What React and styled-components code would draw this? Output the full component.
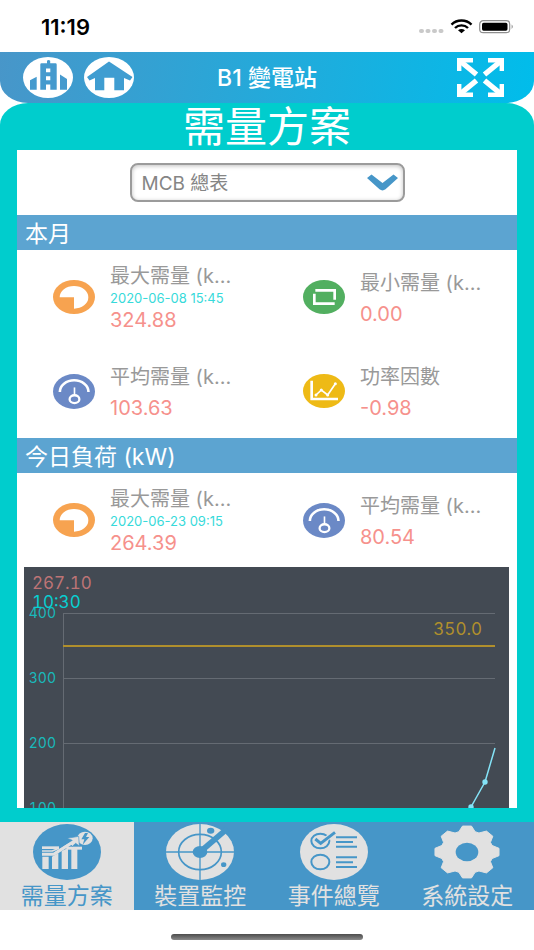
import React, {Component} from 'react';
import styled, {createGlobalStyle} from 'styled-components';

const GlobalStyle = createGlobalStyle`
    * {
        box-sizing: border-box;
    }

    body {
        margin: 0;
        background-color: #fff;
        font-family: Inter, "Noto Sans CJK TC", sans-serif;
    }

    h1, h2, p {
        margin: 0;
        font-weight: 400;
    }

    button, select {
        font-family: inherit;
    }

    svg {
        display: block;
        flex: none;
    }
`;

const StyledApp = styled.div`
    display: flex;
    flex-direction: column;
    height: 100vh;
`;

const StatusBar = styled.div`
    display: flex;
    align-items: center;
    justify-content: space-between;
    flex: none;
    height: 52px;
    padding: 2px 20px 0 41px;
    font-size: 22px;
    font-weight: 600;
    color: #000;
`;

const StyledHeader = styled.header`
    display: grid;
    grid-template-columns: 1fr auto 1fr;
    align-items: center;
    flex: none;
    height: 51px;
    padding: 0 30px 0 23px;
    border-radius: 0 0 28px 28px / 0 0 22px 22px;
    background: linear-gradient(100deg, #4896c9, #00bdeb);
    color: #fff;
`;

const HeaderGroup = styled.div`
    display: flex;
    gap: 11px;
    justify-content: ${props => props.$end ? 'flex-end' : 'flex-start'};
`;

const IconButton = styled.button`
    padding: 0;
    border: 0;
    background: none;
    cursor: pointer;
`;

const StationName = styled.p`
    padding-left: 7px;
    font-size: 23px;
    line-height: 28px;
    font-weight: 500;
`;

const Panel = styled.main`
    display: flex;
    flex-direction: column;
    flex: 1;
    min-height: 0;
    padding: 0 17px 14px;
    border-radius: 28px 28px 0 0 / 22px 22px 0 0;
    background-color: #00cdcd;
`;

const PanelTitle = styled.h1`
    flex: none;
    font-size: 42px;
    line-height: 47px;
    text-align: center;
    color: #fff;
`;

const Content = styled.div`
    flex: 1;
    min-height: 0;
    overflow: hidden;
    background-color: #fff;
`;

const SelectRow = styled.div`
    display: flex;
    justify-content: center;
    padding: 13px 0;
`;

const SelectBox = styled.div`
    position: relative;
    width: 55%;

    svg {
        position: absolute;
        top: 11px;
        right: 7px;
        pointer-events: none;
    }
`;

const StyledSelect = styled.select`
    display: block;
    width: 100%;
    height: 39px;
    padding: 2px 40px 0 10px;
    border: 2px solid #9b9b9b;
    border-radius: 8px;
    box-shadow: inset 0 1px 4px rgba(0, 0, 0, 0.25);
    appearance: none;
    background-color: #fff;
    font-size: 19px;
    color: #858585;
`;

const SectionTitle = styled.h2`
    height: 35px;
    padding: 3px 0 0 8px;
    background-color: #5ca4d1;
    font-size: 23px;
    line-height: 32px;
    color: #fff;
`;

const CardGrid = styled.div`
    display: grid;
    grid-template-columns: 1fr 1fr;
    grid-auto-rows: 94px;
`;

const StyledCard = styled.div`
    display: flex;
    align-items: center;
    gap: 15px;
    padding-left: 36px;
    white-space: nowrap;
`;

const CardText = styled.div`
    display: flex;
    flex-direction: column;
    gap: ${props => props.$spaced ? '9px' : '0'};
    padding-top: 2px;
    line-height: 22px;
`;

const CardLabel = styled.p`
    font-size: 20px;
    color: #999;
`;

const CardTime = styled.p`
    font-size: 13px;
    color: #37dada;
`;

const CardValue = styled.p`
    font-size: 20px;
    color: #f6918c;
`;

const ChartBox = styled.div`
    margin: 0 8px 0 7px;
    background-color: #434a53;
    font-variant-numeric: tabular-nums;

    svg {
        width: 100%;
        height: auto;
    }
`;

const StyledNav = styled.nav`
    display: flex;
    flex: none;
    height: 88px;
    background-color: #4696c8;
`;

const NavButton = styled.button`
    display: flex;
    flex-direction: column;
    align-items: center;
    gap: 2px;
    flex: 1;
    padding: 2px 0 0;
    border: 0;
    background-color: ${props => props.$active ? '#e1e1e1' : '#4696c8'};
    color: ${props => props.$active ? '#4696c8' : '#e1e1e1'};
    font-size: 23px;
    line-height: 28px;
    cursor: pointer;
`;

const HomeArea = styled.div`
    display: flex;
    justify-content: center;
    flex: none;
    height: 40px;
    padding-top: 24px;
`;

const HomeBar = styled.div`
    width: 36%;
    height: 6px;
    border-radius: 3px;
    background: linear-gradient(#4c4c4c, #8a8a8a);
`;

const StatusIcons = () => (
    <svg width="96" height="16" viewBox="0 0 96 16">
        <g fill="#c9c9c9">
            <rect x="1" y="10" width="5" height="4" rx="2" />
            <rect x="7.5" y="10" width="5" height="4" rx="2" />
            <rect x="14" y="10" width="5" height="4" rx="2" />
            <rect x="20.5" y="10" width="5" height="4" rx="2" />
        </g>
        <g fill="none" stroke="#000" strokeWidth="2.4">
            <path d="M33.5 5.6C39 .2 48 .2 53.5 5.6" />
            <path d="M37 9C40.5 5.5 46.5 5.5 50 9" />
        </g>
        <path d="M40 11.3Q43.5 8.7 47 11.3L43.5 14.2Z" />
        <rect x="61.7" y="1.7" width="30" height="12" rx="3.5" fill="#fff" stroke="#8f8f8f" strokeWidth="1.2" />
        <rect x="64" y="3.8" width="25.5" height="7.9" rx="1.6" />
        <path d="M93.6 5.5Q96 7.7 93.6 9.9Z" fill="#8f8f8f" />
    </svg>
);

const BuildingIcon = () => (
    <svg width="50" height="41" viewBox="0 0 50 41">
        <ellipse cx="25" cy="20.5" rx="25" ry="20.5" fill="#fff" />
        <g fill="#459ace">
            <path d="M7 23.3L13.7 19.7V32.7H7Z" />
            <path d="M37 17.5L44 22V32.7H37Z" />
            <path d="M17.3 7.5Q17.3 6.3 18.5 6.3H24V3.7Q25.6 2.2 27.2 3.7V6.3H32.5Q33.7 6.3 33.7 7.5V32.7H27.3V27.5H23V32.7H17.3Z" />
        </g>
        <path d="M23 11.4H27.3V15.3H23ZM23 19.2H27.3V23.2H23Z" fill="#fff" />
    </svg>
);

const HouseIcon = () => (
    <svg width="50" height="41" viewBox="0 0 50 41">
        <ellipse cx="25" cy="20.5" rx="25" ry="20.5" fill="#fff" />
        <path
            d="M25 4.5L48.5 20L46 23.5L40 21V33.2H30.3V20.8H20.3V33.2H11V21L5.5 23.5L3 20Z"
            fill="#3f9dd1"
        />
    </svg>
);

const ExpandIcon = () => (
    <svg width="47" height="39" viewBox="0 0 47 39" fill="none" stroke="#fff" strokeWidth="4.4">
        <path d="M2.2 13V2.2H16M31 2.2H44.8V13M2.2 26V36.8H16M31 36.8H44.8V26" />
        <path d="M3 3L19.5 16.5M44 3L27.5 16.5M3 36L19.5 22.5M44 36L27.5 22.5" strokeWidth="5.4" />
    </svg>
);

const ChevronIcon = () => (
    <svg width="31" height="17" viewBox="0 0 31 17">
        <path d="M0 4L4.5 .5L15.5 9L26.5 .5L31 4L18.5 15.3Q15.5 17.5 12.5 15.3Z" fill="#4696c8" />
    </svg>
);

const PieIcon = () => (
    <svg width="42" height="34" viewBox="0 0 126 102">
        <ellipse cx="63" cy="51" rx="63" ry="51" fill="#f7a350" />
        <path d="M20 52A43 34 0 1 1 63 86V52Z" fill="#fff" />
    </svg>
);

const FrameIcon = () => (
    <svg width="42" height="34" viewBox="0 0 126 102">
        <ellipse cx="63" cy="51" rx="63" ry="51" fill="#52af60" />
        <path d="M37 31H95V59M34 41V71H95" fill="none" stroke="#fff" strokeWidth="8" />
    </svg>
);

const GaugeIcon = () => (
    <svg width="42" height="35" viewBox="0 0 129 107">
        <ellipse cx="64.5" cy="53.5" rx="64.5" ry="53.5" fill="#6b89c6" />
        <g fill="none" stroke="#fff" strokeWidth="8">
            <path d="M21 55A44 36 0 0 1 109 55" />
            <ellipse cx="66" cy="77" rx="15" ry="12" strokeWidth="7" />
            <path d="M66 41V64" strokeWidth="5" />
        </g>
    </svg>
);

const TrendIcon = () => (
    <svg width="42" height="34" viewBox="0 0 126 102">
        <ellipse cx="63" cy="51" rx="63" ry="51" fill="#eeba16" />
        <g fill="none" stroke="#fff">
            <path d="M26 20V75H105" strokeWidth="8" />
            <path d="M39 63L55 48L74 63L97 29" strokeWidth="5" />
        </g>
        <g fill="#fff">
            <circle cx="39" cy="63" r="4.5" />
            <circle cx="55" cy="48" r="4.5" />
            <circle cx="74" cy="63" r="4.5" />
            <circle cx="97" cy="29" r="4.5" />
        </g>
    </svg>
);

const DemandIcon = () => (
    <svg width="68" height="56" viewBox="0 0 204 168">
        <ellipse cx="102" cy="84" rx="102" ry="84" fill="#4696c8" />
        <g fill="#e1e1e1">
            <path d="M28 98H47V135H28ZM57 98L76 87V135H57ZM86 81L105 72V135H86ZM115 72H133V135H115Z" />
            <path d="M100 68H147V77H100Z" />
            <ellipse cx="156" cy="43" rx="23" ry="20" />
        </g>
        <g fill="none" stroke="#e1e1e1" strokeWidth="8">
            <path d="M27 71H78" />
            <path d="M27 81H58L78 73" strokeWidth="5" />
            <path d="M27 91H62L126 50" strokeWidth="9" />
        </g>
        <path
            d="M102 43L137 37L139 66L128 58L118 67L109 58L118 49Z"
            fill="#e1e1e1"
            stroke="#4696c8"
            strokeWidth="2"
        />
        <path d="M65 89L123 52" stroke="#e1e1e1" strokeWidth="8" />
        <path d="M156 27L145 46H154L149 62L169 39H159L165 27Z" fill="#4696c8" />
    </svg>
);

const RadarIcon = () => (
    <svg width="68" height="56" viewBox="0 0 204 168">
        <ellipse cx="102" cy="84" rx="102" ry="84" fill="#e1e1e1" />
        <g fill="none" stroke="#4696c8">
            <ellipse cx="102" cy="84" rx="64" ry="53" strokeWidth="5" />
            <path d="M102 0V168M0 84H204" strokeWidth="4" />
            <path d="M102 84L184 14" strokeWidth="17" />
        </g>
        <g fill="#4696c8">
            <ellipse cx="102" cy="84" rx="22" ry="18" />
            <ellipse cx="134" cy="20" rx="11" ry="9" />
            <ellipse cx="173" cy="122" rx="8" ry="7" />
        </g>
    </svg>
);

const EventIcon = () => (
    <svg width="68" height="56" viewBox="0 0 204 168">
        <ellipse cx="102" cy="84" rx="102" ry="84" fill="#e1e1e1" />
        <g fill="none" stroke="#4696c8" strokeWidth="6">
            <ellipse cx="61" cy="51" rx="27" ry="22" />
            <ellipse cx="61" cy="114" rx="27" ry="22" />
            <path d="M108 40H171M108 54H159M108 68H171M108 100H171M108 115H159M108 129H171" />
        </g>
        <path d="M46 46L62 58L105 25" fill="none" stroke="#e1e1e1" strokeWidth="15" />
        <path d="M46 45L62 58L105 25" fill="none" stroke="#4696c8" strokeWidth="9" />
    </svg>
);

// eight teeth, each one drawn as base, tip, tip, base
const gearPoints = Array.from({length: 8}).flatMap((_, i) => (
    [[-18, 79], [-8, 97], [8, 97], [18, 79]].map(([offset, radius]) => {
        const angle = (i * 45 + offset) * Math.PI / 180;
        return `${102 + radius * Math.sin(angle)},${84 - radius * 0.81 * Math.cos(angle)}`;
    })
)).join(' ');

const GearIcon = () => (
    <svg width="68" height="56" viewBox="0 0 204 168">
        <polygon points={gearPoints} fill="#e1e1e1" stroke="#e1e1e1" strokeWidth="3" strokeLinejoin="round" />
        <ellipse cx="102" cy="84" rx="34" ry="28" fill="#4696c8" />
    </svg>
);

const LoadChart = () => (
    <svg viewBox="0 0 485 350" role="img" aria-label="今日負荷 (kW)">
        <g stroke="#656b73">
            {[46.5, 111.5, 176.5, 241.5, 306.5].map(y => (
                <line key={y} x1="39" x2="471" y1={y} y2={y} />
            ))}
            <line x1="39.5" x2="39.5" y1="46" y2="307" />
        </g>
        <line x1="39" x2="471" y1="79" y2="79" stroke="#b08f2c" strokeWidth="2" />
        <g fill="#19b9bb" fontSize="14" textAnchor="end">
            <text x="32" y="51">400</text>
            <text x="32" y="116">300</text>
            <text x="32" y="181">200</text>
            <text x="32" y="246">100</text>
        </g>
        <g fontSize="17">
            <text x="8" y="22" fill="#bd7476">267.10</text>
            <text x="8" y="41" fill="#08cfd1">10:30</text>
            <text x="458" y="68" fill="#b08f2c" textAnchor="end">350.0</text>
        </g>
        <polyline points="433,275 447,240 461,215 471,181" fill="none" stroke="#84e3f7" strokeWidth="1.5" />
        <circle cx="447" cy="240" r="2.7" fill="#84e3f7" />
        <circle cx="461" cy="215" r="2.7" fill="#84e3f7" />
    </svg>
);

const monthCards = [
    {icon: <PieIcon />, label: '最大需量 (k...', time: '2020-06-08 15:45', value: '324.88'},
    {icon: <FrameIcon />, label: '最小需量 (k...', value: '0.00'},
    {icon: <GaugeIcon />, label: '平均需量 (k...', value: '103.63'},
    {icon: <TrendIcon />, label: '功率因數', value: '-0.98'},
];

const todayCards = [
    {icon: <PieIcon />, label: '最大需量 (k...', time: '2020-06-23 09:15', value: '264.39'},
    {icon: <GaugeIcon />, label: '平均需量 (k...', value: '80.54'},
];

const tabs = [
    {name: '需量方案', icon: <DemandIcon />},
    {name: '裝置監控', icon: <RadarIcon />},
    {name: '事件總覽', icon: <EventIcon />},
    {name: '系統設定', icon: <GearIcon />},
];

const Cards = ({cards}) => (
    <CardGrid>
        {cards.map(card => (
            <StyledCard key={card.label}>
                {card.icon}
                <CardText $spaced={!card.time}>
                    <CardLabel>{card.label}</CardLabel>
                    {card.time && <CardTime>{card.time}</CardTime>}
                    <CardValue>{card.value}</CardValue>
                </CardText>
            </StyledCard>
        ))}
    </CardGrid>
);

class App extends Component {
    constructor(props) {
        super(props);
        this.state = {
            tab: '需量方案',
        };
    }

    render() {
        return (
            <StyledApp>
                <GlobalStyle />
                <StatusBar>
                    <span>11:19</span>
                    <StatusIcons />
                </StatusBar>
                <StyledHeader>
                    <HeaderGroup>
                        <IconButton aria-label="站點"><BuildingIcon /></IconButton>
                        <IconButton aria-label="首頁"><HouseIcon /></IconButton>
                    </HeaderGroup>
                    <StationName>B1 變電站</StationName>
                    <HeaderGroup $end>
                        <IconButton aria-label="全螢幕"><ExpandIcon /></IconButton>
                    </HeaderGroup>
                </StyledHeader>
                <Panel>
                    <PanelTitle>需量方案</PanelTitle>
                    <Content>
                        <SelectRow>
                            <SelectBox>
                                <StyledSelect aria-label="電表">
                                    <option>MCB 總表</option>
                                </StyledSelect>
                                <ChevronIcon />
                            </SelectBox>
                        </SelectRow>
                        <SectionTitle>本月</SectionTitle>
                        <Cards cards={monthCards} />
                        <SectionTitle>今日負荷 (kW)</SectionTitle>
                        <Cards cards={todayCards} />
                        <ChartBox>
                            <LoadChart />
                        </ChartBox>
                    </Content>
                </Panel>
                <StyledNav>
                    {tabs.map(({name, icon}) => (
                        <NavButton
                            key={name}
                            $active={this.state.tab === name}
                            onClick={() => this.setState({tab: name})}
                        >
                            {icon}
                            <span>{name}</span>
                        </NavButton>
                    ))}
                </StyledNav>
                <HomeArea>
                    <HomeBar />
                </HomeArea>
            </StyledApp>
        );
    }
}

export default App;
